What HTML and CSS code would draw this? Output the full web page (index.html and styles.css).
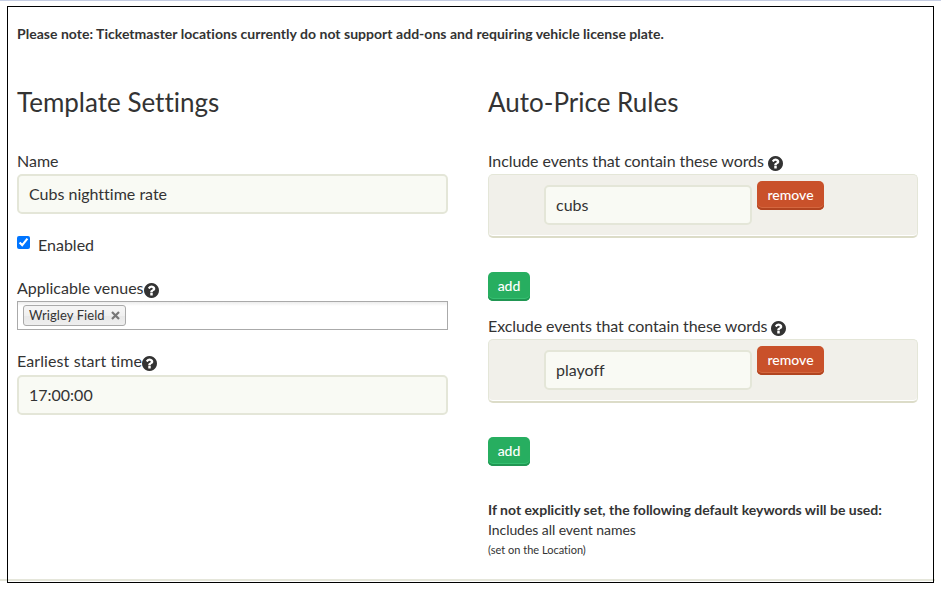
FILE: index.html
```html
<!DOCTYPE html>
<html lang="en">
<head>
    <meta charset="UTF-8">
    <meta name="viewport" content="width=device-width, initial-scale=1.0">
    <title>Template Settings</title>
    <link rel="stylesheet" href="styles.css">
</head>
<body>
<svg width="0" height="0" class="sprites">
    <symbol id="help" viewBox="0 0 1536 1536">
        <path d="M896 1248v-192q0-14-9-23t-23-9H672q-14 0-23 9t-9 23v192q0 14 9 23t23 9h192q14 0 23-9t9-23zm256-672q0-88-55.500-163t-138.500-116-170-41q-243 0-371 213-15 24 8 42l132 100q7 6 19 6 16 0 25-12 53-68 86-92 34-24 86-24 48 0 85.500 26t37.500 59q0 38-20 61t-68 45q-63 28-115.500 86.500T640 892v36q0 14 9 23t23 9h192q14 0 23-9t9-23q0-19 21.500-49.500T972 829q32-18 49-28.500t46-35 44.500-48 28-60.500 12.500-81zm384 192q0 209-103 385.500T1153.500 1433 768 1536t-385.500-103T103 1153.500 0 768t103-385.500T382.500 103 768 0t385.500 103T1433 382.500 1536 768z"/>
    </symbol>
</svg>
<div class="frame">
    <p class="notice">Please note: Ticketmaster locations currently do not support add-ons and requiring vehicle license plate.</p>

    <div class="columns">
        <div class="column">
            <h2>Template Settings</h2>

            <label for="name">Name</label>
            <input type="text" class="field" id="name" value="Cubs nighttime rate">

            <div class="check">
                <input type="checkbox" id="enabled" checked>
                <label for="enabled">Enabled</label>
            </div>

            <label>Applicable venues<svg class="help"><use href="#help"/></svg></label>
            <div class="venues">
                <span class="venue">Wrigley Field
                    <svg viewBox="0 0 9 9"><path d="M1 1l7 7M8 1l-7 7"/></svg>
                </span>
            </div>

            <label for="start" class="start-label">Earliest start time<svg class="help"><use href="#help"/></svg></label>
            <input type="text" class="field time" id="start" value="17:00:00">
        </div>

        <div class="column rules">
            <h2>Auto-Price Rules</h2>

            <label for="include">Include events that contain these words <svg class="help"><use href="#help"/></svg></label>
            <div class="panel">
                <input type="text" class="field" id="include" value="cubs">
                <button type="button" class="btn remove">remove</button>
            </div>
            <button type="button" class="btn add">add</button>

            <label for="exclude">Exclude events that contain these words <svg class="help"><use href="#help"/></svg></label>
            <div class="panel">
                <input type="text" class="field" id="exclude" value="playoff">
                <button type="button" class="btn remove">remove</button>
            </div>
            <button type="button" class="btn add">add</button>

            <div class="defaults">
                <strong>If not explicitly set, the following default keywords will be used:</strong>
                <span>Includes all event names</span>
                <small>(set on the Location)</small>
            </div>
        </div>
    </div>
</div>
</body>
</html>
```

FILE: styles.css
```css
* {
    box-sizing: border-box;
}

body {
    margin: 0;
    height: 592px;
    padding: 5px 7px;
    border-top: 1px solid #c5cde3;
    background: linear-gradient(#e5e6da, #e5e6da) 0 579px / 935px 2px no-repeat #fff;
    font-family: Lato, sans-serif;
    font-size: 16px;
    font-variant-ligatures: none;
    color: #333;
    overflow: hidden;
}

.sprites {
    display: none;
}

.frame {
    width: 927px;
    height: 577px;
    padding: 17px 9px 0;
    border: 1px solid #000;
}

.notice {
    margin: 0;
    font-size: 14px;
    line-height: 20px;
    font-weight: bold;
    letter-spacing: 0.025px;
}

.columns {
    display: grid;
    grid-template-columns: 431px 430px;
    column-gap: 40px;
}

.column {
    display: flex;
    flex-direction: column;
}

h2 {
    margin: 42px 0 32px;
    font-size: 26px;
    line-height: 32px;
    font-weight: normal;
}

label {
    height: 22px;
    line-height: 22px;
    margin-bottom: 2px;
}

.rules label {
    letter-spacing: -0.08px;
}

.help {
    width: 15px;
    height: 15px;
    vertical-align: -3.5px;
    fill: #333;
}

.field {
    width: 100%;
    height: 40px;
    padding: 0 10px 2px;
    border: 2px solid #e4e6d8;
    border-radius: 5px;
    background: #f9faf4;
    font-family: inherit;
    font-size: 16px;
    font-variant-ligatures: none;
    color: #333;
}

.time {
    padding-bottom: 1px;
}

.check {
    display: flex;
    align-items: flex-start;
    margin: 20px 0 19px;
}

.check input {
    width: 13px;
    height: 13px;
    margin: 2px 8px 0 0;
}

/* tag select */
.venues {
    display: flex;
    height: 29px;
    margin-bottom: 20px;
    padding: 3px 5px;
    border: 1px solid #aaa;
    background: linear-gradient(#eee 1%, #fff 15%);
}

.start-label {
    margin-bottom: 3px;
    letter-spacing: 0.1px;
}

.venue {
    display: flex;
    align-items: center;
    gap: 6px;
    width: 103px;
    height: 21px;
    padding: 0 0 1px 5px;
    border: 1px solid #aaa;
    border-radius: 3px;
    background: linear-gradient(#f4f4f4 20%, #f0f0f0 50%, #e8e8e8 52%, #eee);
    font-size: 13px;
    letter-spacing: 0.08px;
    line-height: 18px;
    white-space: nowrap;
}

.venue svg {
    width: 9px;
    height: 9px;
    stroke: #777;
    stroke-width: 2.2;
}

.panel {
    display: flex;
    align-items: flex-start;
    gap: 5px;
    height: 64px;
    margin-bottom: 34px;
    padding: 6px 0 0 55px;
    border: 1px solid #e4e6d8;
    border-bottom: 2px solid #dcdcc8;
    border-radius: 5px;
    background: #f1f0ea;
    box-shadow: inset 0 -1px 0 #fff;
}

.panel .field {
    width: 208px;
    margin-top: 4px;
}

.btn {
    height: 29px;
    padding: 0 0 2px;
    border: 0;
    border-radius: 5px;
    font-family: inherit;
    font-size: 14px;
    font-weight: 500;
    color: #fff;
}

.remove {
    width: 67px;
    background: #c9512a;
    box-shadow: inset 0 -2px 0 #b14420, inset 0 -3px 0 #d4673f;
}

.add {
    width: 42px;
    margin-bottom: 14px;
    background: #27ae60;
    box-shadow: inset 0 -2px 0 #219653, inset 0 -3px 0 #35c071;
}

.defaults {
    display: flex;
    flex-direction: column;
    margin-top: 20px;
    font-size: 14px;
    line-height: 20px;
}

.defaults span {
    letter-spacing: -0.06px;
}

.defaults small {
    font-size: 11px;
}
```
